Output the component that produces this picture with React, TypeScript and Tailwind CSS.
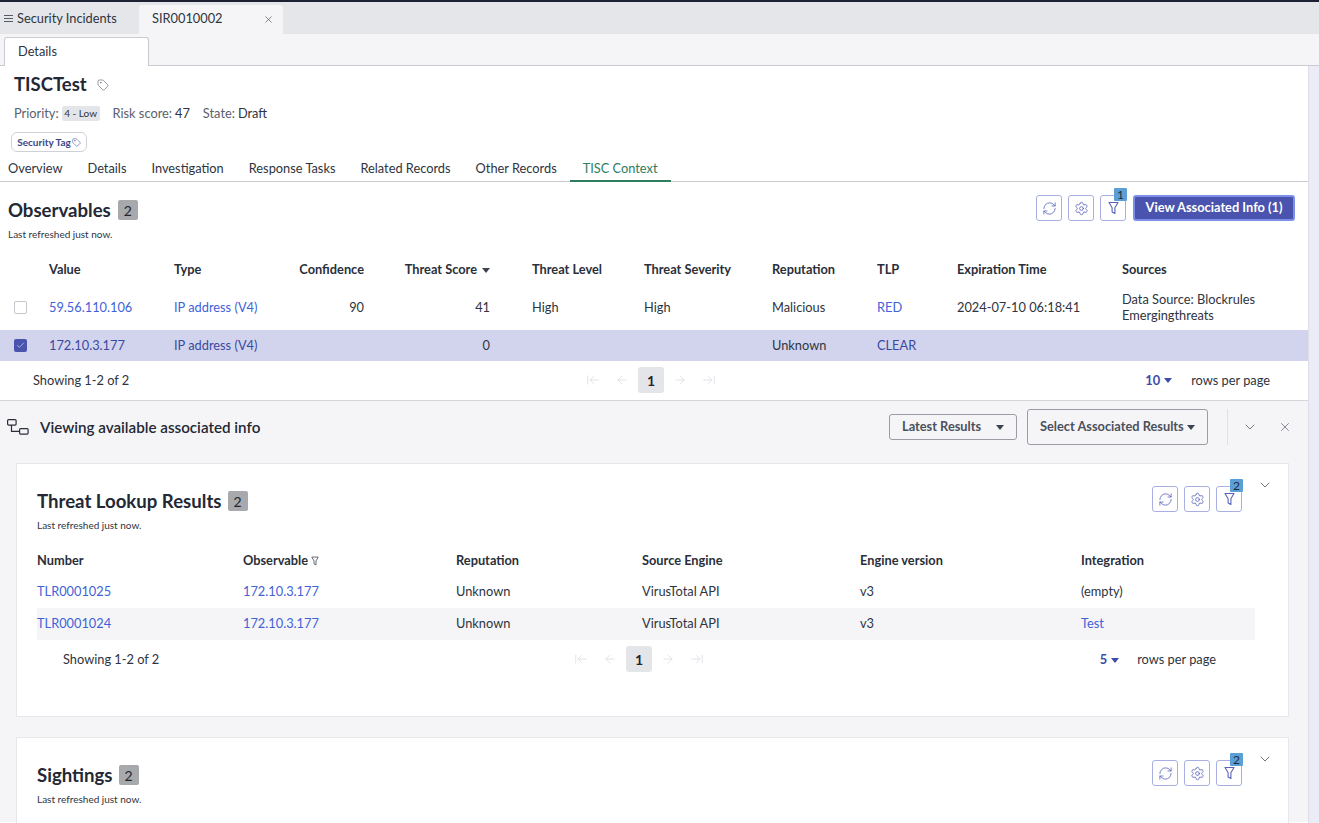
import {
  ArrowLeft,
  ArrowLeftToLine,
  ArrowRight,
  ArrowRightToLine,
  Check,
  ChevronDown,
  RefreshCw,
  Settings,
  Tag,
  X,
} from "lucide-react";

const OBS_COLS =
  "grid grid-cols-[49px_125px_110px_80px_126px_154px_128px_105px_80px_165px_1fr] items-center";
const TLR_COLS = "grid grid-cols-[206px_213px_186px_218px_221px_1fr] items-center";

function FunnelIcon({ width, height }: { width: number; height: number }) {
  return (
    <svg width={width} height={height} viewBox="0 0 11 14" fill="none" stroke="currentColor" strokeWidth="1.1" strokeLinejoin="round">
      <path d="M1 1.5h9L6.9 6.8v5.7L4.1 11V6.8z" />
    </svg>
  );
}

function IconButtons({ count }: { count: number }) {
  return (
    <div className="flex gap-[6px]">
      <button type="button" className="flex h-[26px] w-[26px] items-center justify-center rounded-[3px] border border-[#a9aee3] bg-white text-[#5a63b8]">
        <RefreshCw size={15} strokeWidth={1.3} />
      </button>
      <button type="button" className="flex h-[26px] w-[26px] items-center justify-center rounded-[3px] border border-[#a9aee3] bg-white text-[#5a63b8]">
        <Settings size={15} strokeWidth={1.3} />
      </button>
      <button type="button" className="relative flex h-[26px] w-[26px] items-center justify-center rounded-[3px] border border-[#a9aee3] bg-white text-[#5a63b8]">
        <FunnelIcon width={11} height={14} />
        <span className="absolute -right-[2px] -top-[8px] flex h-[13px] w-[13px] items-center justify-center rounded-[1px] bg-[#5b9fd6] text-[12px] leading-none text-[#1f2a3a]">
          {count}
        </span>
      </button>
    </div>
  );
}

function Pager() {
  return (
    <div className="flex items-center text-[#d5d7dc]">
      <ArrowLeftToLine size={14} strokeWidth={1.2} />
      <ArrowLeft size={14} strokeWidth={1.2} className="ml-[15px]" />
      <span className="ml-[9px] flex h-[26px] w-[26px] items-center justify-center rounded-[3px] bg-[#e4e5e9] text-[14px] font-bold text-[#1f2430]">
        1
      </span>
      <ArrowRight size={14} strokeWidth={1.2} className="ml-[9px]" />
      <ArrowRightToLine size={14} strokeWidth={1.2} className="ml-[15px]" />
    </div>
  );
}

function Caret({ className }: { className: string }) {
  return <span className={`inline-block h-0 w-0 border-x-[4px] border-t-[5px] border-x-transparent ${className}`} />;
}

function Badge({ value }: { value: number }) {
  return (
    <span className="flex h-[20px] w-[20px] items-center justify-center rounded-[2px] bg-[#a8a9ad] text-[14px] text-[#22262e]">
      {value}
    </span>
  );
}

function Link({ children }: { children: string }) {
  return <span className="text-[#3f62d8]">{children}</span>;
}

function CardHeader({ title, count }: { title: string; count: number }) {
  return (
    <div className="flex items-start justify-between pl-[20px] pr-[15px]">
      <div className="pt-[22px]">
        <div className="flex items-center gap-[6px]">
          <h2 className="text-[18.6px] font-bold leading-[30px] text-[#232834]">{title}</h2>
          <Badge value={count} />
        </div>
        <p className="mt-[2px] text-[10px] leading-[14px] text-[#2e3440]">Last refreshed just now.</p>
      </div>
      <div className="flex items-start gap-[15px] pt-[22px]">
        <IconButtons count={count} />
        <ChevronDown size={16} strokeWidth={1.2} className="-mt-[9px] text-[#4b5260]" />
      </div>
    </div>
  );
}

export default function App() {
  return (
    <div className="h-[823px] w-[1319px] overflow-hidden bg-white text-[12.8px] text-[#2e3440] [font-family:Lato,'Open_Sans',sans-serif]">
      <div className="flex h-[34px] items-end border-t-[2px] border-[#1c2133] bg-[#e4e6ea]">
        <div className="flex h-[32px] w-[139px] items-center pl-[4px] pt-[1px]">
          <span className="mr-[4px] flex w-[9px] flex-col gap-[2px]">
            <span className="h-px bg-[#555b66]" />
            <span className="h-px bg-[#555b66]" />
            <span className="h-px bg-[#555b66]" />
          </span>
          Security Incidents
        </div>
        <div className="flex h-[29px] w-[144px] items-center justify-between rounded-t-[3px] bg-[#f5f5f7] pl-[13px] pr-[9px] pb-[1px]">
          <span>SIR0010002</span>
          <X size={11} strokeWidth={1.4} className="text-[#444a55]" />
        </div>
      </div>

      <div className="flex h-[32px] items-end border-b border-[#c9cbd1] bg-[#f5f5f7] pl-[4px]">
        <div className="-mb-px flex h-[29px] w-[145px] items-center rounded-t-[3px] border border-b-0 border-[#c9cbd1] bg-white pb-[1px] pl-[13px]">
          Details
        </div>
      </div>

      <div className="flex h-[757px] items-start">
        <div className="w-[1308px]">
          <div className="pl-[14px] pt-[5px]">
            <div className="flex items-center gap-[10px]">
              <h1 className="text-[18.5px] font-bold leading-[26px] text-[#232834]">TISCTest</h1>
              <Tag size={12} strokeWidth={1.2} className="mt-[1px] text-[#555b66]" />
            </div>
            <div className="mt-[6px] flex items-center leading-[20px] text-[#5a606c]">
              <span>Priority:</span>
              <span className="ml-[3px] rounded-[2px] bg-[#e4e5e9] px-[2.5px] text-[10px] leading-[15px] text-[#2e3440]">4 - Low</span>
              <span className="ml-[13px]">Risk score:</span>
              <span className="ml-[3px] text-[#2e3440]">47</span>
              <span className="ml-[13px]">State:</span>
              <span className="ml-[3px] text-[#2e3440]">Draft</span>
            </div>
          </div>
          <div className="ml-[11px] mt-[9px] flex h-[20px] w-[76px] items-center justify-center gap-[1px] rounded-[6px] border border-[#cfd1d8] text-[10px] font-bold text-[#3d4487]">
            Security Tag
            <Tag size={9} strokeWidth={1.4} />
          </div>

          <div className="flex h-[30px] items-start border-b border-[#c9cbd1] pl-[8px] leading-[20px]">
            <span className="pt-[6px]">Overview</span>
            <span className="ml-[25px] pt-[6px]">Details</span>
            <span className="ml-[25px] pt-[6px]">Investigation</span>
            <span className="ml-[25px] pt-[6px]">Response Tasks</span>
            <span className="ml-[25px] pt-[6px]">Related Records</span>
            <span className="ml-[25px] pt-[6px]">Other Records</span>
            <span className="ml-[13px] -mb-px h-[30px] border-b-[2px] border-[#2f7d5f] px-[13px] pt-[6px] text-[#2f7d5f]">TISC Context</span>
          </div>

          <div className="flex items-start justify-between pl-[8px] pr-[13px]">
            <div className="pt-[14px]">
              <div className="flex items-center gap-[7px]">
                <h2 className="text-[18.6px] font-bold leading-[28px] text-[#232834]">Observables</h2>
                <Badge value={2} />
              </div>
              <p className="mt-[3px] text-[10px] leading-[14px] text-[#2e3440]">Last refreshed just now.</p>
            </div>
            <div className="flex items-center gap-[7px] pt-[13px]">
              <IconButtons count={1} />
              <button type="button" className="flex h-[26px] w-[162px] items-center justify-center rounded-[3px] border-2 border-[#7e8fe8] bg-[#4a53ae] font-bold text-white">
                View Associated Info (1)
              </button>
            </div>
          </div>

          <div className={`${OBS_COLS} mt-[15px] h-[28px] font-bold text-[#2a2f3a]`}>
            <span />
            <span>Value</span>
            <span>Type</span>
            <span className="text-right">Confidence</span>
            <span className="flex items-center justify-end gap-[5px]">
              Threat Score
              <Caret className="border-t-[#3c4250]" />
            </span>
            <span className="pl-[42px]">Threat Level</span>
            <span>Threat Severity</span>
            <span>Reputation</span>
            <span>TLP</span>
            <span>Expiration Time</span>
            <span>Sources</span>
          </div>
          <div className={`${OBS_COLS} h-[46px] leading-[16px]`}>
            <span className="pl-[14px]">
              <span className="block h-[13px] w-[13px] rounded-[2px] border border-[#c4c6cc] bg-white" />
            </span>
            <Link>59.56.110.106</Link>
            <Link>IP address (V4)</Link>
            <span className="text-right">90</span>
            <span className="text-right">41</span>
            <span className="pl-[42px]">High</span>
            <span>High</span>
            <span>Malicious</span>
            <Link>RED</Link>
            <span>2024-07-10 06:18:41</span>
            <span>
              Data Source: Blockrules
              <br />
              Emergingthreats
            </span>
          </div>
          <div className={`${OBS_COLS} h-[31px] bg-[#d2d4ed]`}>
            <span className="pl-[14px]">
              <span className="flex h-[13px] w-[13px] items-center justify-center rounded-[2px] bg-[#4a53ae] text-white">
                <Check size={9} strokeWidth={1.4} />
              </span>
            </span>
            <span className="text-[#3a4a9f]">172.10.3.177</span>
            <span className="text-[#3a4a9f]">IP address (V4)</span>
            <span />
            <span className="text-right">0</span>
            <span />
            <span />
            <span>Unknown</span>
            <span className="text-[#3a4a9f]">CLEAR</span>
            <span />
            <span />
          </div>
          <div className="relative flex h-[40px] items-center justify-between border-b border-[#d4d5da] pl-[33px] pr-[38px]">
            <span>Showing 1-2 of 2</span>
            <div className="absolute left-[586px] top-[6px]">
              <Pager />
            </div>
            <div className="flex items-center">
              <span className="font-bold text-[#3d4ba8]">10</span>
              <Caret className="ml-[4px] border-t-[#3d4ba8]" />
              <span className="ml-[19px]">rows per page</span>
            </div>
          </div>

          <div className="h-[421px] bg-[#f5f5f7]">
            <div className="flex h-[51px] items-center pl-[7px] pr-[16px] pt-[1px]">
              <svg width="22" height="16" viewBox="0 0 22 16" fill="none" stroke="#2a2f3a" strokeWidth="1.2">
                <rect x="0.6" y="0.6" width="8.5" height="5.5" rx="1" />
                <rect x="12.6" y="9.6" width="8.5" height="5.5" rx="1" />
                <path d="M4.5 6.1V12.4H12.6" />
              </svg>
              <span className="ml-[11px] text-[15.2px] font-semibold text-[#232834]">Viewing available associated info</span>
              <div className="ml-auto flex items-center">
                <button type="button" className="flex h-[26px] w-[128px] items-center justify-between whitespace-nowrap rounded-[3px] border border-[#9a9da5] px-[12px] font-bold text-[#4a505c]">
                  Latest Results
                  <Caret className="border-t-[#3c4250]" />
                </button>
                <button type="button" className="ml-[10px] flex h-[36px] w-[181px] items-center justify-between whitespace-nowrap rounded-[3px] border border-[#9a9da5] px-[12px] font-bold text-[#4a505c]">
                  Select Associated Results
                  <Caret className="border-t-[#3c4250]" />
                </button>
                <span className="ml-[19px] h-[36px] w-px bg-[#dfe0e4]" />
                <ChevronDown size={16} strokeWidth={1.2} className="ml-[14px] text-[#555b66]" />
                <X size={14} strokeWidth={1.2} className="ml-[20px] text-[#555b66]" />
              </div>
            </div>

            <section className="ml-[16px] mr-[19px] mt-[11px] h-[254px] border border-[#e6e7eb] bg-white">
              <CardHeader title="Threat Lookup Results" count={2} />

              <div className="ml-[20px] mr-[33px] mt-[13px]">
                <div className={`${TLR_COLS} h-[31px] font-bold text-[#2a2f3a]`}>
                  <span>Number</span>
                  <span className="flex items-center gap-[3px]">
                    Observable
                    <span className="text-[#3c4250]">
                      <FunnelIcon width={8} height={10} />
                    </span>
                  </span>
                  <span>Reputation</span>
                  <span>Source Engine</span>
                  <span>Engine version</span>
                  <span>Integration</span>
                </div>
                <div className={`${TLR_COLS} h-[32px]`}>
                  <Link>TLR0001025</Link>
                  <Link>172.10.3.177</Link>
                  <span>Unknown</span>
                  <span>VirusTotal API</span>
                  <span>v3</span>
                  <span>(empty)</span>
                </div>
                <div className={`${TLR_COLS} h-[32px] bg-[#f5f5f7]`}>
                  <Link>TLR0001024</Link>
                  <Link>172.10.3.177</Link>
                  <span>Unknown</span>
                  <span>VirusTotal API</span>
                  <span>v3</span>
                  <Link>Test</Link>
                </div>
                <div className="relative flex h-[40px] items-center justify-between pl-[26px] pr-[39px]">
                  <span>Showing 1-2 of 2</span>
                  <div className="absolute left-[537px] top-[6px]">
                    <Pager />
                  </div>
                  <div className="flex items-center">
                    <span className="font-bold text-[#3d4ba8]">5</span>
                    <Caret className="ml-[4px] border-t-[#3d4ba8]" />
                    <span className="ml-[18px]">rows per page</span>
                  </div>
                </div>
              </div>
            </section>

            <section className="ml-[16px] mr-[19px] mt-[20px] h-[120px] border border-[#e6e7eb] bg-white">
              <CardHeader title="Sightings" count={2} />
            </section>
          </div>
        </div>
        <div className="h-full w-[11px] border-l border-[#dcdde6] bg-[#ebecf6]" />
      </div>
    </div>
  );
}
